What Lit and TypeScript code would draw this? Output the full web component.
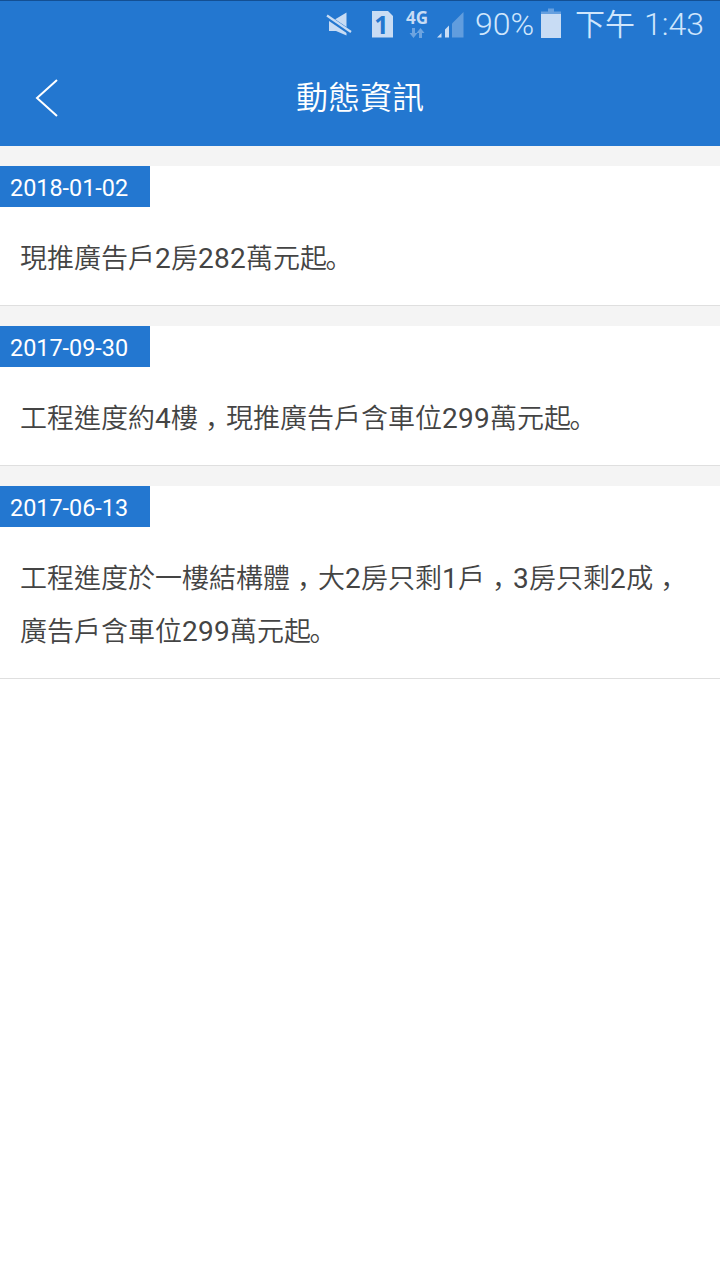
import { LitElement, html, css } from "lit";
import { customElement } from "lit/decorators.js";

interface News { date: string; lines: string[]; }

const NEWS: News[] = [
  { date: "2018-01-02", lines: ["現推廣告戶2房282萬元起。"] },
  { date: "2017-09-30", lines: ["工程進度約4樓，現推廣告戶含車位299萬元起。"] },
  { date: "2017-06-13", lines: ["工程進度於一樓結構體，大2房只剩1戶，3房只剩2成，", "廣告戶含車位299萬元起。"] },
];

// Digits and punctuation are set apart from the ideographs around them.
const typeset = (line: string) =>
  line.split(/(\d+|，|。)/).filter(Boolean).map((part) =>
    /\d/.test(part) ? html`<span class="num">${part}</span>`
      : part === "，" ? html`<span class="comma">${part}</span>`
      : part === "。" ? html`<span class="stop">${part}</span>`
      : part);

@customElement("status-bar")
class StatusBar extends LitElement {
  static styles = css`
    :host { display: flex; height: 50px; box-sizing: border-box; border-top: 1px solid #134f93; color: #d0e6fc; font-weight: 300; }
    svg { display: block; width: 250px; height: 49px; margin-left: 320px; flex: none; }
    .pct { font-size: 32px; line-height: 47px; margin-left: -95px; width: 65px; white-space: nowrap; }
    .time { display: flex; gap: 9px; font-size: 32px; line-height: 47px; margin-left: 35px; white-space: nowrap; }
    .half { font-size: 30px; font-weight: 350; }
  `;
  render() {
    return html`
      <svg viewBox="320 1 250 49" fill="#c8dcf4">
        <path d="M329 20h5l12.500-7.500V35.500L336 31h-7z" />
        <path d="M326 16l25 17" stroke="#2377d0" stroke-width="5" />
        <path d="M327 15.500l24 16.500" stroke="#c8dcf4" stroke-width="2.200" />
        <path d="M372 11h16l5 5v21.500h-21z" />
        <text x="381.500" y="34" font-size="25" font-weight="700" font-family="Open Sans" fill="#2377d0" text-anchor="middle">1</text>
        <text x="406" y="23.500" font-size="17" font-weight="700" font-family="Open Sans">4G</text>
        <path d="M412 28h3v5h2.500l-4 5-4-5h2.500zM419 38v-5h-2.500l4-5 4 5H422v5z" opacity=".45" />
        <path d="M452 23.500l11.500-11.500V37.500H452z" opacity=".38" />
        <path d="M445 29.500l4-4v12h-4zM437 37.500l4.500-4.500v4.500z" />
        <path d="M548 8.500h6v3h7v3h-20v-3h7z" opacity=".4" />
        <path d="M541 14h20v24h-20z" />
      </svg>
      <span class="pct">90%</span>
      <span class="time"><span class="half">下午</span><span>1:43</span></span>
    `;
  }
}

@customElement("app-root")
class AppRoot extends LitElement {
  static styles = css`
    :host { display: block; min-height: 1280px; background: #fff; color: #444; font-family: Roboto, "Noto Sans CJK TC", sans-serif; }
    .top { background: #2377d0; height: 146px; }
    .nav { height: 96px; display: grid; grid-template-columns: 94px 1fr 94px; align-items: center; }
    .back { display: block; width: 94px; height: 96px; }
    h1 { margin: 0; color: #fff; font-size: 32px; font-weight: 350; line-height: 96px; text-align: center; }
    .item { border-top: 20px solid #f4f4f4; border-bottom: 1px solid #dfdfdf; }
    .date { width: 150px; height: 41px; box-sizing: border-box; padding-left: 10px; background: #2377d0; color: #fff; font-size: 23.4px; line-height: 44px; }
    .text { padding: 23px 20px 22px; font-size: 27px; font-weight: 350; line-height: 53px; white-space: nowrap; }
    .line { height: 53px; }
    .num { font-family: Roboto, sans-serif; font-size: 28px; font-weight: 400; letter-spacing: .28px; }
    .comma, .stop { font-family: "Noto Sans CJK SC", sans-serif; }
    .comma { font-feature-settings: "halt"; padding: 0 7.5px 0 7px; }
    .stop { margin-left: -1.5px; }
  `;
  render() {
    return html`
      <div class="top">
        <status-bar></status-bar>
        <div class="nav">
          <svg class="back" viewBox="0 0 94 96" fill="none" stroke="#fff" stroke-width="2"><path d="M57 30L37 48l20 18" /></svg>
          <h1>動態資訊</h1>
        </div>
      </div>
      ${NEWS.map((n) => html`<section class="item"><div class="date">${n.date}</div><div class="text">${n.lines.map((l) => html`<div class="line">${typeset(l)}</div>`)}</div></section>`)}
    `;
  }
}
